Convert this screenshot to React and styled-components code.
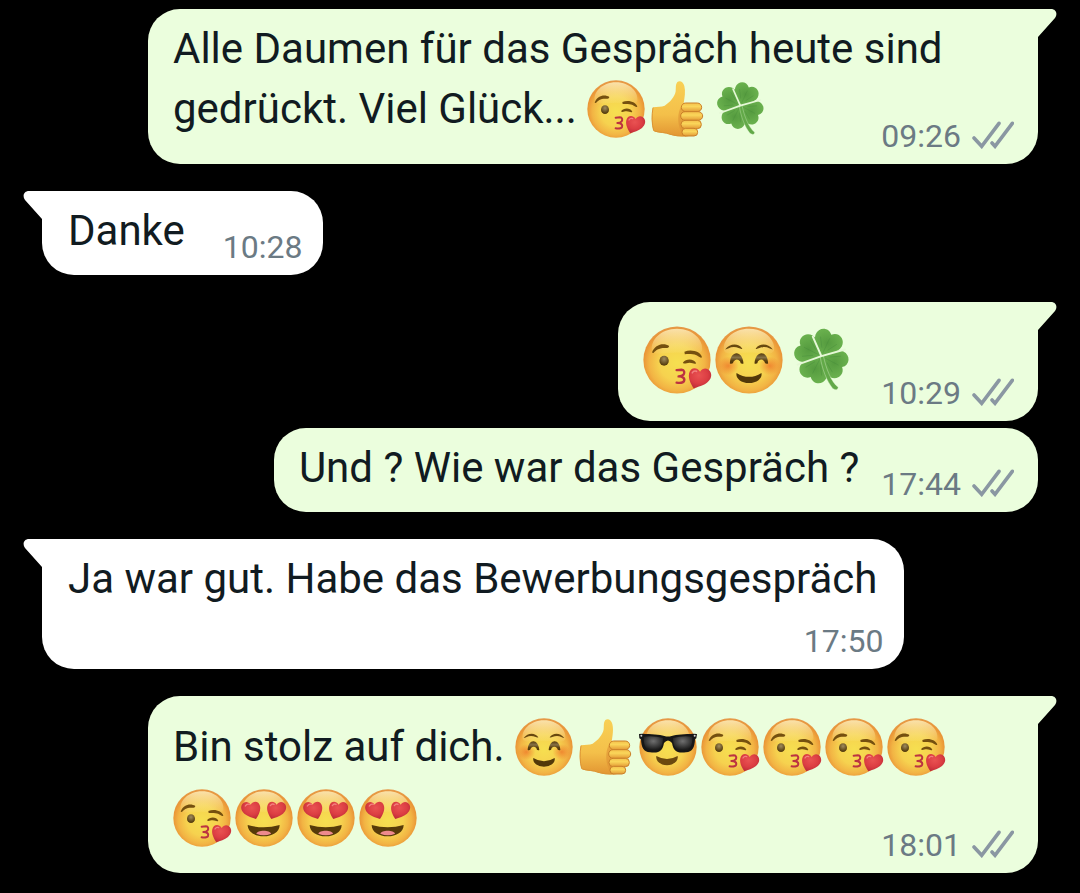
import React from 'react'
import styled, { createGlobalStyle, css } from 'styled-components'


const GlobalStyle = createGlobalStyle`
    * {
        box-sizing: border-box;
    }

    body {
        margin: 0;
        background: #000;
        font-family: Roboto, 'Liberation Sans', sans-serif;
    }
`;

const Chat = styled.main`
    display: flex;
    flex-direction: column;
    padding: 9px 42px 20px;
`;

const Bubble = styled.article`
    position: relative;
    display: grid;
    grid-template-columns: auto auto;
    column-gap: ${({ $sent }) => $sent ? '22px' : '38px'};
    align-self: ${({ $sent }) => $sent ? 'flex-end' : 'flex-start'};
    max-width: calc(100% - 106px);
    margin-top: ${({ $tail }) => $tail ? '27px' : '7px'};
    padding: 15px ${({ $sent }) => $sent ? '24px' : '21px'} 9px ${({ $sent }) => $sent ? '25px' : '26px'};
    border-radius: 32px;
    background: ${({ $sent }) => $sent ? '#ebfedd' : '#fff'};

    ${({ $tail, $sent }) => $tail && ($sent
        ? css`border-top-right-radius: 0;`
        : css`border-top-left-radius: 0;`)}

    ${({ $layout }) => $layout !== 'inline' && css`
        grid-template-columns: auto;
        row-gap: 8px;
    `}

    &:first-child {
        margin-top: 0;
    }
`;

const Tail = styled.svg`
    position: absolute;
    top: 0;
    width: 20px;
    height: 29px;
    fill: ${({ $sent }) => $sent ? '#ebfedd' : '#fff'};
    ${({ $sent }) => $sent
        ? css`right: -19px;`
        : css`
            left: -19px;
            transform: scaleX(-1);
        `}
`;

const Text = styled.p`
    margin: 0;
    padding: 0 ${({ $layout }) => $layout === 'inline' ? '0' : '6px'} 11px 0;
    color: #111b21;
    font-size: 42px;
    line-height: 49px;
    ${({ $layout }) => $layout === 'overlay' && css`grid-area: 1 / 1;`}
`;

const Meta = styled.footer`
    display: flex;
    align-items: center;
    align-self: end;
    justify-self: end;
    gap: 11px;
    color: #6b7a84;
    font-size: 32px;
    line-height: 38px;
    ${({ $layout }) => $layout === 'overlay' && css`grid-area: 1 / 1;`}
`;

const Checks = styled.svg`
    width: 42px;
    height: 28px;
    margin-bottom: 2px;
    fill: none;
    stroke: #8a97a2;
    stroke-width: 3.6;
    stroke-linecap: round;
`;

const EmojiIcon = styled.svg`
    width: ${({ $large }) => $large ? '68px' : '58px'};
    height: ${({ $large }) => $large ? '68px' : '58px'};
    margin: ${({ $large }) => $large ? '9px 4px 7px 0' : '7px 4px 6px 0'};
    vertical-align: ${({ $large }) => $large ? 'top' : '-21px'};
    overflow: visible;
`;

const Gradients = styled.svg`
    position: absolute;
    width: 0;
    height: 0;
`;

const HEART = 'M130 160 C122 148 115 134 118 121 C121 107 137 103 146 117 C153 106 165 107 171 115 C178 125 174 136 165 144 C155 153 141 155 130 160 Z';
const LEAF = 'M0 0 C-13 -14 -35 -24 -37 -44 C-38 -65 -14 -76 0 -60 C14 -76 38 -65 37 -44 C35 -24 13 -14 0 0 Z';

const SharedGradients = () => (
    <Gradients aria-hidden="true">
        <defs>
            <radialGradient id="skin" cx="50%" cy="54%" r="53%">
                <stop offset="0" stopColor="#f6df50" />
                <stop offset="0.5" stopColor="#f6d24f" />
                <stop offset="0.78" stopColor="#f2b444" />
                <stop offset="0.94" stopColor="#ea9637" />
                <stop offset="1" stopColor="#e59a4a" />
            </radialGradient>
            <linearGradient id="shine" x1="0" y1="0" x2="0" y2="1">
                <stop offset="0" stopColor="#fdf0c0" stopOpacity="0.85" />
                <stop offset="1" stopColor="#fbeb98" stopOpacity="0.1" />
            </linearGradient>
            <radialGradient id="eye" cx="50%" cy="32%" r="60%">
                <stop offset="0" stopColor="#a08c5e" />
                <stop offset="1" stopColor="#563d0d" />
            </radialGradient>
            <linearGradient id="happyEye" x1="0" y1="0" x2="0" y2="1">
                <stop offset="0" stopColor="#553a0d" />
                <stop offset="0.4" stopColor="#857146" />
                <stop offset="0.7" stopColor="#5a400f" />
                <stop offset="1" stopColor="#4c3307" />
            </linearGradient>
            <radialGradient id="blush">
                <stop offset="0" stopColor="#ee7428" stopOpacity="0.75" />
                <stop offset="1" stopColor="#ee7428" stopOpacity="0" />
            </radialGradient>
            <radialGradient id="heart" cx="45%" cy="35%" r="65%">
                <stop offset="0" stopColor="#e95252" />
                <stop offset="0.6" stopColor="#dc3e43" />
                <stop offset="1" stopColor="#bd2c38" />
            </radialGradient>
            <radialGradient id="lens" cx="50%" cy="35%" r="60%">
                <stop offset="0" stopColor="#707070" />
                <stop offset="1" stopColor="#1c1c1c" />
            </radialGradient>
            <linearGradient id="hand" x1="0" y1="0" x2="0" y2="1">
                <stop offset="0" stopColor="#f8d055" />
                <stop offset="0.6" stopColor="#f4c04a" />
                <stop offset="1" stopColor="#e29532" />
            </linearGradient>
            <linearGradient id="finger" x1="0" y1="0" x2="0" y2="1">
                <stop offset="0" stopColor="#f4c04c" />
                <stop offset="0.4" stopColor="#fad65a" />
                <stop offset="1" stopColor="#e39a36" />
            </linearGradient>
            <radialGradient id="leaf" cx="50%" cy="45%" r="60%">
                <stop offset="0" stopColor="#559b3f" />
                <stop offset="1" stopColor="#6db450" />
            </radialGradient>
        </defs>
    </Gradients>
)

const Face = () => (
    <>
        <circle cx="87" cy="87" r="86" fill="url(#skin)" />
        <path d="M87 7 C130 7 155 38 151 62 C147 77 119 68 87 68 C55 68 27 77 23 62 C19 38 44 7 87 7 Z" fill="url(#shine)" />
    </>
)

const Kiss = () => (
    <>
        <Face />
        <path d="M23 68 C30 46 54 42 67 51 C66 57 60 56 55 56 C40 56 32 62 27 69 Z" fill="#75500f" />
        <path d="M106 66 C124 58 148 66 151 80 C147 83 143 78 137 75 C127 71 118 72 107 72 Z" fill="#75500f" />
        <path d="M102 94 C110 83 130 83 136 95 C132 99 128 94 119 94 C111 94 106 99 102 94 Z" fill="#75500f" />
        <ellipse cx="54" cy="89" rx="12" ry="13" fill="url(#eye)" />
        <path d="M86 113 L99 112 C106 112 107 120 104 124 C101 128 96 129 91 129 C102 129 108 134 105 141 C102 147 94 146 86 145" fill="none" stroke="#bc3341" strokeWidth="6" strokeLinecap="round" strokeLinejoin="round" />
        <path d={HEART} fill="url(#heart)" />
        <path d="M126 120 Q130 113 137 116" fill="none" stroke="#f38080" strokeWidth="4" strokeLinecap="round" />
    </>
)

const Smile = () => (
    <>
        <Face />
        <ellipse cx="34" cy="102" rx="27" ry="24" fill="url(#blush)" />
        <ellipse cx="140" cy="102" rx="27" ry="24" fill="url(#blush)" />
        <path d="M26 60 C38 44 60 43 70 58 C66 61 60 54 48 54 C38 54 31 60 26 60 Z" fill="#68480f" />
        <path d="M148 60 C136 44 114 43 104 58 C108 61 114 54 126 54 C136 54 143 60 148 60 Z" fill="#68480f" />
        <path d="M38 96 C39 62 70 60 73 96 Q65 99 64 90 Q56 82 48 90 Q46 99 38 96 Z" fill="url(#happyEye)" />
        <path d="M101 96 C104 60 135 62 136 96 Q128 99 126 90 Q118 82 110 90 Q109 99 101 96 Z" fill="url(#happyEye)" />
        <path d="M55 120 Q87 140 119 120 C122 134 106 146 87 146 C68 146 52 134 55 120 Z" fill="#533909" />
    </>
)

const Cool = () => (
    <>
        <Face />
        <path d="M52 114 Q84 132 116 114 C119 128 103 142 84 142 C65 142 49 128 52 114 Z" fill="#6b490f" />
        <path d="M0 48 L10 47 C36 49 62 48 76 54 Q87 57 98 54 C112 48 138 49 164 47 L174 48 L172 61 L168 64 C167 89 160 102 141 103 C111 106 104 99 99 75 Q87 60 75 75 C70 99 63 106 33 103 C14 102 7 89 6 64 L1 61 Z" fill="#161616" />
        <path d="M14 56 Q44 52 72 60 C71 90 62 99 38 97 C18 98 14 78 14 56 Z" fill="url(#lens)" />
        <path d="M160 56 Q130 52 102 60 C103 90 112 99 136 97 C156 98 160 78 160 56 Z" fill="url(#lens)" />
        <circle cx="7" cy="53" r="3" fill="#d8d8d8" />
        <circle cx="167" cy="53" r="3" fill="#d8d8d8" />
    </>
)

const Love = () => (
    <>
        <Face />
        <path d={HEART} transform="translate(-21 -70)" fill="url(#heart)" />
        <path d={HEART} transform="translate(193 -70) scale(-1 1)" fill="url(#heart)" />
        <path d="M31 51 Q36 43 43 46 M106 50 Q111 43 117 46" fill="none" stroke="#f38080" strokeWidth="4" strokeLinecap="round" />
        <path d="M38 108 Q86 122 134 108 C134 129 112 142 86 142 C60 142 38 129 38 108 Z" fill="#573b09" />
        <path d="M64 134 C66 122 106 122 108 134 Q87 144 64 134 Z" fill="#ee8a8d" />
    </>
)

const Thumb = () => (
    <>
        <path d="M12 82 C25 79 37 81 47 77 C62 68 78 50 80 34 C81 22 79 13 85 6 C93 0 103 6 106 18 C110 34 107 52 104 70 L122 78 L118 169 C94 170 76 170 62 163 C48 157 28 160 14 153 C7 132 7 103 12 82 Z" fill="url(#hand)" />
        <path d="M98 78 C84 96 84 138 100 160 L110 160 L110 78 Z" fill="#dd9133" opacity="0.6" />
        <path d="M12 83 C8 104 8 132 14 152 M16 153 C32 158 50 157 63 163 Q82 169 112 168" fill="none" stroke="#dc9434" strokeWidth="3" />
        <g fill="url(#finger)" stroke="#cb8029" strokeWidth="3">
            <rect x="97" y="69" width="61" height="26" rx="13" />
            <rect x="95" y="95" width="66" height="26" rx="13" />
            <rect x="96" y="121" width="61" height="25" rx="12" />
            <rect x="99" y="145" width="47" height="23" rx="11" />
        </g>
    </>
)

const Clover = () => (
    <g transform="translate(88 77)">
        {[25, 118, 207, 297].map(angle => (
            <g key={angle} transform={`rotate(${angle})`}>
                <path d={LEAF} fill="url(#leaf)" />
                <path d="M0 -8 V-50 M-8 -20 L-23 -44 M8 -20 L23 -44" fill="none" stroke="#46893a" strokeWidth="2" opacity="0.45" />
            </g>
        ))}
        <path d="M-3 1 C2 34 13 62 29 83 Q42 91 43 80 C25 66 12 32 5 -1 Z" fill="#62a948" stroke="#dcf3cb" strokeWidth="1" />
        <path d="M-61 22 L0 0 L60 -17 M0 0 L-22 -50" fill="none" stroke="#e6f8d7" strokeWidth="5" strokeLinecap="round" />
    </g>
)

const EMOJIS = {
    kiss: { label: '😘', Drawing: Kiss },
    smile: { label: '☺️', Drawing: Smile },
    cool: { label: '😎', Drawing: Cool },
    love: { label: '😍', Drawing: Love },
    thumb: { label: '👍', Drawing: Thumb },
    clover: { label: '🍀', Drawing: Clover },
}

const messages = [
    { sent: true, tail: true, layout: 'overlay', time: '09:26', text: 'Alle Daumen für das Gespräch heute sind gedrückt. Viel Glück... ', emojis: ['kiss', 'thumb', 'clover'] },
    { sent: false, tail: true, layout: 'inline', time: '10:28', text: 'Danke' },
    { sent: true, tail: true, layout: 'inline', time: '10:29', emojis: ['kiss', 'smile', 'clover'] },
    { sent: true, tail: false, layout: 'inline', time: '17:44', text: 'Und ? Wie war das Gespräch ?' },
    { sent: false, tail: true, layout: 'stacked', time: '17:50', text: 'Ja war gut. Habe das Bewerbungsgespräch' },
    { sent: true, tail: true, layout: 'overlay', time: '18:01', text: 'Bin stolz auf dich. ', emojis: ['smile', 'thumb', 'cool', 'kiss', 'kiss', 'kiss', 'kiss', 'kiss', 'love', 'love', 'love'] },
]

function Emoji({ name, large }) {

    const { label, Drawing } = EMOJIS[name];

    return (
        <EmojiIcon $large={large} viewBox="0 0 174 174" role="img" aria-label={label}>
            <Drawing />
        </EmojiIcon>
    )
}

function Message(props) {

    const { sent, tail, layout, time, text, emojis = [] } = props;

    return (
        <Bubble $sent={sent} $tail={tail} $layout={layout}>
            {tail && (
                <Tail $sent={sent} viewBox="0 0 20 29" aria-hidden="true">
                    <path d="M0 0 H14 C19 0 21 5 18 9 L1 28 V29 H0 Z" />
                </Tail>
            )}
            <Text $layout={layout}>
                {text}
                {emojis.map((name, i) => <Emoji key={i} name={name} large={!text} />)}
            </Text>
            <Meta $layout={layout}>
                <time>{time}</time>
                {sent && (
                    <Checks viewBox="0 0 42 28" role="img" aria-label="Zugestellt">
                        <path d="M2 17 L9.7 25.3 L27 2.3 M20 22 L23 25.3 L40.3 2.3" />
                    </Checks>
                )}
            </Meta>
        </Bubble>
    )
}

export default function App() {
    return (
        <>
            <GlobalStyle />
            <SharedGradients />
            <Chat>
                {messages.map(message => <Message key={message.time} {...message} />)}
            </Chat>
        </>
    )
}
